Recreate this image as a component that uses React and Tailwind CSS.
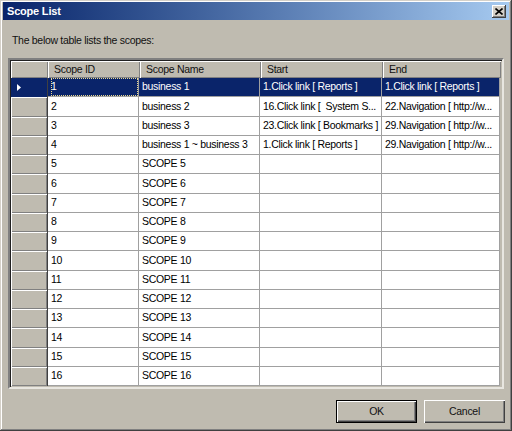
import React from "react";

const rows = [
  { id: "1", name: "business 1", start: "1.Click link [ Reports ]", end: "1.Click link [ Reports ]" },
  { id: "2", name: "business 2", start: "16.Click link [  System S...", end: "22.Navigation [ http://w..." },
  { id: "3", name: "business 3", start: "23.Click link [ Bookmarks ]", end: "29.Navigation [ http://w..." },
  { id: "4", name: "business 1 ~ business 3", start: "1.Click link [ Reports ]", end: "29.Navigation [ http://w..." },
];
for (let i = 5; i <= 16; i++) rows.push({ id: String(i), name: `SCOPE ${i}`, start: "", end: "" });

const raised = "shadow-[inset_1px_1px_#ffffff,inset_-1px_-1px_#808080]";

function HeaderCell({ w, children }) {
  return (
    <div className={`${w} h-full flex items-center pl-[6px] bg-[#bfbbb0] ${raised} whitespace-nowrap overflow-hidden`}>
      {children}
    </div>
  );
}

function Cell({ w, sel, focus, children }) {
  return (
    <div
      className={`${w} h-full flex items-center pl-[3px] border-r border-b border-[#a0a0a0] whitespace-pre overflow-hidden ${
        sel ? "bg-[#0a246a] text-white" : "bg-white text-black"
      }`}
    >
      <div className={`h-full w-full flex items-center ${focus ? "outline outline-1 outline-dotted outline-[#e8d890] -outline-offset-1" : ""}`}>
        {children}
      </div>
    </div>
  );
}

export default function App() {
  return (
    <div className="w-[512px] h-[431px] bg-[#bfbbb0] font-['Liberation_Sans',Arial,sans-serif] text-[10.5px] tracking-[-0.3px] text-[#111] flex flex-col shadow-[inset_-1px_-1px_#404040,inset_1px_1px_#d4d0c8,inset_-2px_-2px_#808080,inset_2px_2px_#ffffff]">
      {/* title bar */}
      <div className="mx-[3px] mt-[2px] h-[18px] flex items-center justify-between pl-[4px] pr-[3px] bg-gradient-to-r from-[#0a246a] to-[#a6caf0]">
        <span className="font-bold text-white text-[11px] tracking-[-0.2px] leading-none">Scope List</span>
        <div className="w-[14px] h-[13px] bg-[#d4d0c8] flex items-center justify-center shadow-[inset_-1px_-1px_#404040,inset_1px_1px_#ffffff,inset_-2px_-2px_#808080]">
          <svg width="8" height="7" viewBox="0 0 8 7">
            <path d="M0.5 0.5 L7.5 6.5 M7.5 0.5 L0.5 6.5" stroke="#000" strokeWidth="1.6" />
          </svg>
        </div>
      </div>

      <p className="ml-[12px] mt-[14px] h-[13px] leading-[13px]">The below table lists the scopes:</p>

      {/* grid */}
      <div className="ml-[8px] mt-[11px] w-[496px] border-2 border-t-[#808080] border-l-[#808080] border-r-[#e8e6e0] border-b-[#e8e6e0] shadow-[inset_1px_1px_#202020]">
        <div className="p-[1px]">
          <div className="flex h-[17px]">
            <HeaderCell w="w-[37px]" />
            <HeaderCell w="w-[92px]">Scope ID</HeaderCell>
            <HeaderCell w="w-[121px]">Scope Name</HeaderCell>
            <HeaderCell w="w-[122px]">Start</HeaderCell>
            <HeaderCell w="w-[118px]">End</HeaderCell>
          </div>
          {rows.map((r, i) => {
            const sel = i === 0;
            return (
              <div key={r.id} className="flex h-[19.25px]">
                <div
                  className={`w-[37px] h-full flex items-center pl-[6px] border-r border-[#404040] ${
                    sel ? "bg-[#0a246a]" : `bg-[#bfbbb0] ${raised}`
                  }`}
                >
                  {sel && (
                    <svg width="4" height="7" viewBox="0 0 4 7">
                      <polygon points="0,0 4,3.5 0,7" fill="#ffffff" />
                    </svg>
                  )}
                </div>
                <Cell w="w-[91px]" sel={sel} focus={sel}>{r.id}</Cell>
                <Cell w="w-[121px]" sel={sel}>{r.name}</Cell>
                <Cell w="w-[122px]" sel={sel}>{r.start}</Cell>
                <Cell w="w-[118px]" sel={sel}>{r.end}</Cell>
              </div>
            );
          })}
        </div>
      </div>

      {/* buttons */}
      <div className="flex justify-end gap-[7px] mt-[11px] mr-[7px]">
        <button className="w-[81px] h-[23px] bg-[#bfbbb0] border border-black shadow-[inset_1px_1px_#ffffff,inset_-1px_-1px_#404040,inset_-2px_-2px_#808080]">
          OK
        </button>
        <button className="w-[81px] h-[23px] bg-[#bfbbb0] shadow-[inset_1px_1px_#ffffff,inset_-1px_-1px_#404040,inset_-2px_-2px_#808080]">
          Cancel
        </button>
      </div>
    </div>
  );
}
